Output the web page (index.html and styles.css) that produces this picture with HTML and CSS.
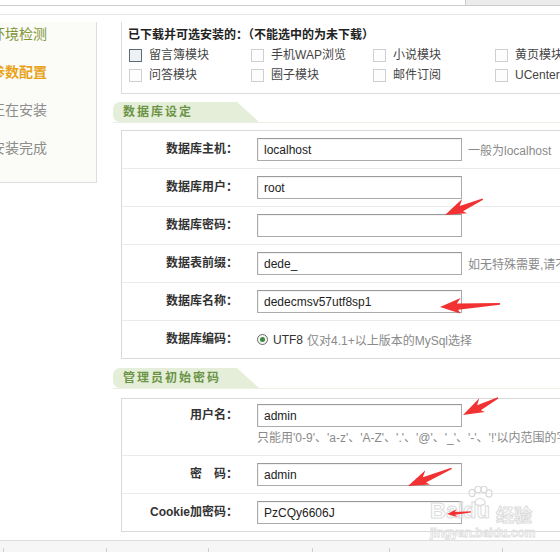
FILE: index.html
```html
<!DOCTYPE html>
<html lang="zh-CN">
<head>
<meta charset="utf-8">
<title>参数配置</title>
<link rel="stylesheet" href="styles.css">
</head>
<body>
<div class="topbar">
  <div class="topbar-line"><div class="topbar-tab"></div></div>
</div>
<div class="layout">
  <aside class="steps">
    <div class="step done">环境检测</div>
    <div class="step current">参数配置</div>
    <div class="step">正在安装</div>
    <div class="step">安装完成</div>
  </aside>
  <main class="content">
    <div class="modules">
      <div class="modules-title">已下载并可选安装的：（不能选中的为未下载）</div>
      <div class="modules-grid">
        <label class="mod"><span class="cb cb-focus"></span>留言簿模块</label>
        <label class="mod"><span class="cb"></span>手机WAP浏览</label>
        <label class="mod"><span class="cb"></span>小说模块</label>
        <label class="mod"><span class="cb"></span>黄页模块</label>
        <label class="mod"><span class="cb"></span>问答模块</label>
        <label class="mod"><span class="cb"></span>圈子模块</label>
        <label class="mod"><span class="cb"></span>邮件订阅</label>
        <label class="mod"><span class="cb"></span>UCenter模块</label>
      </div>
    </div>

    <div class="sec-head"><span class="sec-tab">数据库设定</span></div>
    <div class="sec-box">
      <div class="row"><div class="lbl">数据库主机：</div><div class="val"><input class="txt" value="localhost"><span class="hint">一般为localhost</span></div></div>
      <div class="row"><div class="lbl">数据库用户：</div><div class="val"><input class="txt" value="root"></div></div>
      <div class="row"><div class="lbl">数据库密码：</div><div class="val"><input class="txt" value=""></div></div>
      <div class="row"><div class="lbl">数据表前缀：</div><div class="val"><input class="txt" value="dede_"><span class="hint">如无特殊需要,请不要修改</span></div></div>
      <div class="row"><div class="lbl">数据库名称：</div><div class="val"><input class="txt" value="dedecmsv57utf8sp1"></div></div>
      <div class="row"><div class="lbl">数据库编码：</div><div class="val"><span class="radio"><span class="radio-dot"></span></span><span class="radio-text">UTF8</span><span class="radio-hint">仅对4.1+以上版本的MySql选择</span></div></div>
    </div>

    <div class="sec-head sec-head-2"><span class="sec-tab">管理员初始密码</span></div>
    <div class="sec-box sec-box-2">
      <div class="row row-tall"><div class="lbl">用户名：</div><div class="val val-col"><input class="txt" value="admin"><span class="hint-below">只能用'0-9'、'a-z'、'A-Z'、'.'、'@'、'_'、'-'、'!'以内范围的字符</span></div></div>
      <div class="row"><div class="lbl">密　码：</div><div class="val"><input class="txt" value="admin"></div></div>
      <div class="row"><div class="lbl">Cookie加密码：</div><div class="val"><input class="txt" value="PzCQy6606J"></div></div>
    </div>
  </main>
</div>
<div class="footer">
  <span class="fcell c1"></span><span class="fcell c2"></span><span class="fcell c3"></span><span class="fcell c4"></span><span class="fcell c5"></span><span class="fcell c6"></span>
</div>

<div class="watermark">
  <svg class="paw" width="26" height="20" viewBox="0 0 26 20">
    <g fill="none" stroke="#d8d8d8" stroke-width="1.2">
      <ellipse cx="5" cy="7" rx="3" ry="3.6"/>
      <ellipse cx="11" cy="3.5" rx="3" ry="3.3"/>
      <ellipse cx="17" cy="3.5" rx="3" ry="3.3"/>
      <ellipse cx="22" cy="7.5" rx="3" ry="3.6"/>
      <path d="M8 17 C8 11 18 11 18 17 C18 20 8 20 8 17 Z"/>
    </g>
  </svg>
  <span class="wm-big">Bai</span><span class="wm-big wm-du">du</span><span class="wm-big wm-jy">经验</span>
  <span class="wm-url">jingyan.baidu.com</span>
</div>

<svg class="arrows" width="560" height="552" viewBox="0 0 560 552">
  <g fill="#f23232">
    <polygon transform="translate(445,215) rotate(-22.8)" points="0,0 22,-8 17,-2.6 41,-0.7 41,0.7 18,3.6 21,7"/>
    <polygon transform="translate(440,307) rotate(-3)" points="0,0 21,-8 17,-2.6 60,-0.8 60,0.8 18,3.6 20,7.5"/>
    <polygon transform="translate(463,415) rotate(-26)" points="0,0 22,-8 17,-2.6 39,-0.7 39,0.7 18,3.6 21,7"/>
    <polygon transform="translate(408,486) rotate(-22)" points="0,0 22,-8 17,-2.6 47,-0.7 47,0.7 18,3.6 21,7"/>
    <polygon transform="translate(447,514) rotate(-5)" points="0,0 10,-4 8,-1.2 24,-0.6 24,0.6 8,1.5 10,4"/>
  </g>
</svg>
</body>
</html>
```
FILE: styles.css
```css
html, body {
  margin: 0;
  padding: 0;
}
body {
  width: 560px;
  height: 552px;
  overflow: hidden;
  position: relative;
  background: #ffffff;
  font-family: "Liberation Sans", "Noto Sans CJK SC", sans-serif;
  font-size: 12px;
  color: #333333;
}

/* top strip */
.topbar {
  height: 14px;
  border-bottom: 1px solid #e6e6e6;
}
.topbar-line {
  height: 5px;
  border-bottom: 1px solid #cdcdcd;
  display: flex;
  justify-content: flex-end;
}
.topbar-tab {
  width: 94px;
  height: 5px;
  background: #ececec;
  border-left: 1px solid #cdcdcd;
}

/* layout */
.layout {
  display: flex;
  align-items: flex-start;
  padding-top: 7px;
}
.steps {
  width: 96px;
  height: 159px;
  flex: none;
  background: #fbfcf7;
  border-right: 1px solid #dedede;
  border-bottom: 1px solid #dedede;
  overflow: hidden;
  padding-top: 1px;
  box-sizing: content-box;
  display: flex;
  flex-direction: column;
  gap: 18px;
}
.step {
  height: 20px;
  line-height: 20px;
  font-size: 14px;
  text-indent: -9px;
  white-space: nowrap;
  color: #8c8c8c;
  font-family: "Noto Sans CJK SC", sans-serif;
}
.step.done {
  color: #7f9434;
}
.step.current {
  color: #e8a218;
  font-weight: bold;
}

.content {
  flex: 1;
  min-width: 0;
  margin-left: 16px;
  margin-right: -20px;
}

/* modules */
.modules {
  margin-left: 8px;
  border-left: 1px solid #dcdcdc;
  border-bottom: 1px solid #dcdcdc;
  padding: 5px 0 8px 6px;
}
.modules-title {
  font-weight: bold;
  line-height: 16px;
  color: #222222;
}
.modules-grid {
  display: grid;
  grid-template-columns: repeat(4, 122px);
  margin-top: 2px;
  padding-left: 1px;
}
.mod {
  display: flex;
  align-items: center;
  height: 20px;
  line-height: 20px;
  color: #444444;
  white-space: nowrap;
}
.cb {
  width: 11px;
  height: 11px;
  border: 1px solid #cfcfcf;
  background: #fdfdfd;
  margin-right: 7px;
  flex: none;
}
.cb-focus {
  border-color: #5d6b78;
  background: #eef1f4;
}

/* section heads */
.sec-head {
  margin-top: 8px;
  display: flex;
  border-bottom: 1px solid #ecefe6;
}
.sec-head-2 {
  margin-top: 9px;
}
.sec-tab {
  width: 146px;
  height: 20px;
  line-height: 20px;
  box-sizing: border-box;
  padding-left: 10px;
  background: #e5eed9;
  border-radius: 7px 0 0 7px;
  clip-path: polygon(0 0, calc(100% - 22px) 0, 100% 100%, 0 100%);
  color: #6b9447;
  font-weight: bold;
  letter-spacing: 2px;
  white-space: nowrap;
}

/* section boxes */
.sec-box {
  margin-top: 7px;
  margin-left: 8px;
  border: 1px solid #d9d9d9;
}
.sec-box-2 {
  margin-top: 9px;
}
.row {
  display: grid;
  grid-template-columns: 118px 1fr;
  align-items: center;
  height: 37px;
  border-top: 1px solid #ebebeb;
}
.row:first-child {
  border-top: none;
}
.row-tall {
  height: 56px;
  align-items: start;
  padding-top: 5px;
  box-sizing: border-box;
}
.lbl {
  text-align: right;
  padding-right: 2px;
  font-weight: bold;
  color: #333333;
  line-height: 23px;
  white-space: nowrap;
}
.val {
  display: flex;
  align-items: center;
  padding-left: 17px;
  white-space: nowrap;
}
.val-col {
  flex-direction: column;
  align-items: flex-start;
}
.txt {
  width: 205px;
  height: 23px;
  box-sizing: border-box;
  margin: 0;
  border: 1px solid #ababab;
  border-top-color: #9a9a9a;
  box-shadow: inset 1px 1px 1px rgba(0, 0, 0, 0.06);
  padding: 0 6px;
  font-family: "Liberation Sans", "Noto Sans CJK SC", sans-serif;
  font-size: 12px;
  color: #222222;
  background: #ffffff;
  flex: none;
}
.hint {
  margin-left: 6px;
  color: #8a8a8a;
}
.hint-below {
  margin-top: 5px;
  line-height: 12px;
  color: #8a8a8a;
}
.radio {
  width: 9px;
  height: 9px;
  border: 1px solid #6a6a6a;
  border-radius: 50%;
  display: flex;
  align-items: center;
  justify-content: center;
  background: #f6f6f6;
  flex: none;
}
.radio-dot {
  width: 5px;
  height: 5px;
  border-radius: 50%;
  background: #3e8a3e;
}
.radio-text {
  margin-left: 5px;
  color: #333333;
}
.radio-hint {
  margin-left: 4px;
  color: #8a8a8a;
}

/* footer */
.footer {
  margin-top: 8px;
  height: 11px;
  border-top: 1px solid #dddddd;
  background: #f6f6f6;
  display: flex;
  align-items: flex-end;
}
.fcell {
  height: 4px;
  border-left: 1px solid #cfcfcf;
  flex: none;
}
.c1 { margin-left: 3px; width: 102px; }
.c2 { width: 101px; }
.c3 { width: 103px; }
.c4 { width: 76px; }
.c5 { width: 112px; }
.c6 { width: 40px; }

/* overlays */
.watermark {
  position: absolute;
  left: 430px;
  top: 486px;
  width: 120px;
  height: 60px;
  pointer-events: none;
}
.paw {
  position: absolute;
  left: 37px;
  top: 0;
}
.wm-big {
  position: absolute;
  top: 12px;
  font-family: "Liberation Sans", "Noto Sans CJK SC", sans-serif;
  font-weight: bold;
  font-size: 22px;
  color: rgba(255, 255, 255, 0.4);
  -webkit-text-stroke: 1px #dcdcdc;
}
.wm-big:first-of-type { left: 0; }
.wm-du { left: 33px; }
.wm-jy { left: 66px; font-size: 18px; top: 15px; }
.wm-url {
  position: absolute;
  left: 0;
  top: 40px;
  font-weight: bold;
  font-size: 12px;
  color: rgba(255, 255, 255, 0.4);
  -webkit-text-stroke: 0.8px #dddddd;
  white-space: nowrap;
}
.arrows {
  position: absolute;
  left: 0;
  top: 0;
  pointer-events: none;
}
```
